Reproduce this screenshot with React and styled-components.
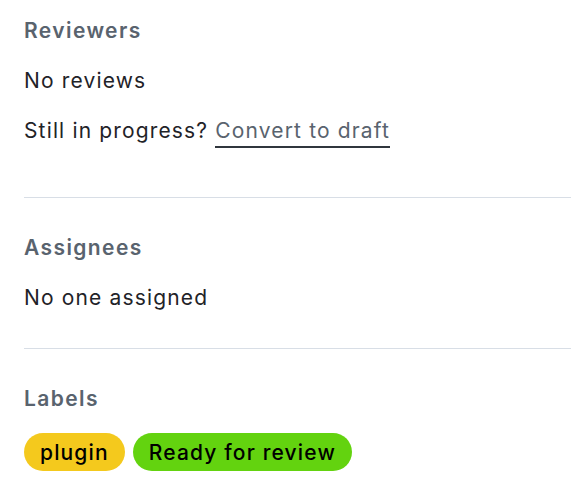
import React from 'react'
import styled, { createGlobalStyle } from 'styled-components'

const GlobalStyle = createGlobalStyle`
  body {
    margin: 0;
    background: #ffffff;
    font-family: Inter, "Noto Sans", sans-serif;
    color: #1f2328;
  }
`

const Sidebar = styled.aside`
  display: flex;
  flex-direction: column;
  padding-left: 24px;
`

const Section = styled.section`
  display: flex;
  flex-direction: column;
  gap: ${(p) => p.gap || 20}px;
  padding: ${(p) => (p.first ? 16 : 35)}px 0 35px;
  border-top: ${(p) => (p.first ? 'none' : '1px solid #d8dee6')};
`

const Heading = styled.h2`
  margin: 0;
  font-size: 21px;
  line-height: 30px;
  font-weight: 600;
  letter-spacing: 1.4px;
  color: #59636e;
`

const Text = styled.p`
  margin: 0 0 ${(p) => p.extra || 0}px;
  font-size: 21px;
  line-height: 30px;
  font-weight: 400;
  letter-spacing: 1.15px;
  color: #1f2328;
`

const DraftLink = styled.a`
  color: #59636e;
  text-decoration: none;
  border-bottom: 2px solid #30363d;
  padding-bottom: 3px;
  cursor: pointer;
`

const LabelRow = styled.div`
  display: flex;
  gap: 8px;
`

const Label = styled.span`
  display: inline-flex;
  align-items: center;
  height: 38px;
  padding: 0 16px;
  border-radius: 19px;
  background: ${(p) => p.color};
  color: #000000;
  font-size: 21px;
  font-weight: 500;
  letter-spacing: 1.15px;
`

const labels = [
  { name: 'plugin', color: '#f4c91d' },
  { name: 'Ready for review', color: '#63d30f' },
]

export default function App() {
  return (
    <>
      <GlobalStyle />
      <Sidebar>
        <Section first>
          <Heading>Reviewers</Heading>
          <Text>No reviews</Text>
          <Text extra={16}>
            Still in progress? <DraftLink>Convert to draft</DraftLink>
          </Text>
        </Section>
        <Section>
          <Heading>Assignees</Heading>
          <Text>No one assigned</Text>
        </Section>
        <Section gap={19}>
          <Heading>Labels</Heading>
          <LabelRow>
            {labels.map((l) => (
              <Label key={l.name} color={l.color}>
                {l.name}
              </Label>
            ))}
          </LabelRow>
        </Section>
      </Sidebar>
    </>
  )
}
